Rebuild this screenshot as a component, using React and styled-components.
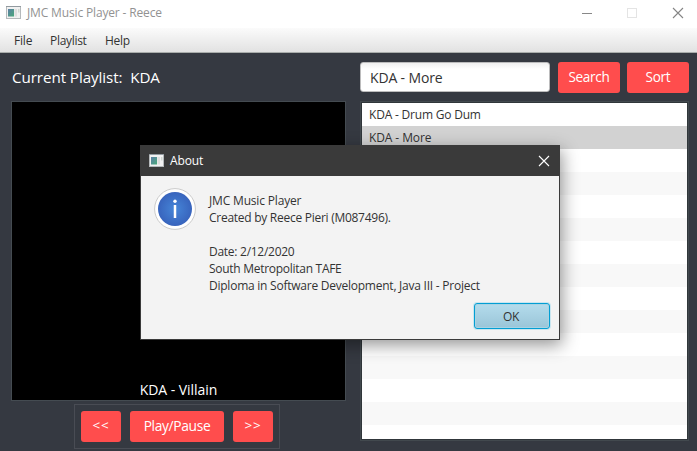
import React from "react";
import styled, { createGlobalStyle } from "styled-components";

const Global = createGlobalStyle`
  * { box-sizing: border-box; }
  body { margin: 0; overflow: hidden; font-family: "Open Sans", "Noto Sans", sans-serif; }
`;

const Window = styled.div`
  position: relative;
  width: 697px;
  height: 451px;
  display: flex;
  flex-direction: column;
  background: #353941;
  overflow: hidden;
`;

const Text = styled.span`
  display: block;
  white-space: pre;
  font-size: ${(p) => p.$size || 12}px;
  letter-spacing: ${(p) => p.$track || 0}px;
  line-height: 17px;
  color: ${(p) => p.$color || "#333"};
`;

const TitleBar = styled.header`
  height: 28px;
  flex: none;
  display: flex;
  align-items: center;
  background: #fff;
  padding: 0 13px 3px 6px;
  gap: 6px;
`;

const WindowControls = styled.div`
  margin-left: auto;
  display: flex;
  align-items: center;
  gap: 35px;
`;

const MenuBar = styled.nav`
  height: 25px;
  flex: none;
  display: flex;
  align-items: center;
  padding: 1px 14px 0;
  background: linear-gradient(#fbfbfb, #e2e2e2);
  border-bottom: 1px solid #a9adab;
`;

const MenuItem = styled.div`
  width: ${(p) => p.$width}px;
`;

const Body = styled.main`
  flex: 1;
  display: grid;
  grid-template-columns: 335px 329px;
  column-gap: 14px;
  padding: 9px 8px 2px 11px;
`;

const Column = styled.section`
  display: flex;
  flex-direction: column;
`;

const Heading = styled.div`
  height: 39px;
  padding: 7px 0 0 1px;
`;

const Video = styled.div`
  height: 300px;
  background: #000;
  border: 1px solid #444b51;
  display: flex;
  align-items: flex-end;
  justify-content: center;
  padding-bottom: 2px;
`;

const Controls = styled.div`
  width: 206px;
  height: 45px;
  margin: 3px 0 0 63px;
  border: 1px solid #494c54;
  display: flex;
  gap: 9px;
  padding: 6px;
`;

const RedButton = styled.button`
  width: ${(p) => p.$width}px;
  height: 31px;
  flex: none;
  border: 0;
  padding: 0 0 2px;
  border-radius: 3px;
  background: #ff4d4d;
  font-family: inherit;
  display: flex;
  align-items: center;
  justify-content: center;
`;

const SearchRow = styled.div`
  height: 39px;
  display: flex;
  align-items: flex-start;
`;

const SearchField = styled.div`
  width: 190px;
  height: 30px;
  margin-right: 8px;
  padding: 0 9px;
  border: 1px solid #bcbcbd;
  border-radius: 3px;
  background: linear-gradient(#f0f0f0, #fff 6px);
  display: flex;
  align-items: center;
`;

const Gap = styled.div`
  width: 7px;
`;

const SongList = styled.div`
  height: 340px;
  padding: 1px;
  border: 1px solid #42494e;
  background: #30363a;
`;

const SongRows = styled.div`
  height: 336px;
  overflow: hidden;
`;

const Song = styled.div`
  height: 23px;
  padding: 3px 7px;
  background: ${(p) => (p.$selected ? "#d2d2d2" : "#fff")};
  &:nth-child(even) {
    background: ${(p) => (p.$selected ? "#d2d2d2" : "#f8f8f8")};
  }
`;

const Dialog = styled.div`
  position: absolute;
  left: 140px;
  top: 145px;
  width: 420px;
  height: 195px;
  border: 1px solid #3a3a3a;
  background: #f3f3f3;
  box-shadow: 2px 5px 16px rgba(0, 0, 0, 0.42);
  display: flex;
  flex-direction: column;
`;

const DialogTitle = styled.div`
  height: 30px;
  flex: none;
  display: flex;
  align-items: center;
  gap: 6px;
  padding: 0 9px 1px 8px;
  background: #3a3a3a;
`;

const DialogClose = styled.div`
  display: flex;
  margin-left: auto;
`;

const DialogBody = styled.div`
  display: flex;
  gap: 13px;
  padding: 12px 0 0 13px;
`;

const Message = styled.div`
  padding-top: 4px;
  display: flex;
  flex-direction: column;
`;

const DialogFooter = styled.div`
  margin: auto 9px 10px 0;
  display: flex;
  justify-content: flex-end;
`;

const OkButton = styled.button`
  width: 76px;
  height: 26px;
  padding: 0 2px 0 0;
  border: 1px solid #039ed3;
  border-radius: 3px;
  box-shadow: 0 0 0 1px #c9e6f0, inset 0 0 0 1px #a9d3e3;
  background: linear-gradient(#b4dcec, #9ac5d8);
  font-family: inherit;
  display: flex;
  align-items: center;
  justify-content: center;
`;

const AppIcon = () => (
  <svg width="15" height="14" viewBox="0 0 15 14">
    <defs>
      <linearGradient id="screen" x2="1" y2="1">
        <stop offset="0" stopColor="#5d7fa6" />
        <stop offset="1" stopColor="#48a879" />
      </linearGradient>
    </defs>
    <rect x=".5" y=".5" width="14" height="12" fill="#f1f1f1" stroke="#b5b9bb" />
    <path d="M0 .5h15" stroke="#929a9f" />
    <rect x="2" y="3" width="6" height="7.5" fill="url(#screen)" />
    <rect x="8.5" y="3" width="2.5" height="7.5" fill="#dedede" />
    <rect x="12" y="3" width="1.5" height="3.5" fill="#d0d8d2" />
  </svg>
);

const Cross = ({ color }) => (
  <svg width="12" height="12" viewBox="0 0 12 12">
    <path d="M1 1l10 10M11 1L1 11" stroke={color} strokeWidth="1.1" fill="none" />
  </svg>
);

const InfoIcon = () => (
  <svg width="42" height="42" viewBox="0 0 42 42">
    <defs>
      <radialGradient id="blue">
        <stop offset="0" stopColor="#4686d8" />
        <stop offset="1" stopColor="#3864bd" />
      </radialGradient>
    </defs>
    <circle cx="21" cy="21" r="20.4" fill="#fff" stroke="#cbcbcb" />
    <circle cx="21" cy="21" r="17" fill="url(#blue)" />
    <circle cx="21" cy="13.2" r="1.7" fill="#fff" />
    <path d="M21 17v13" stroke="#fff" strokeWidth="2.5" />
  </svg>
);

const songs = ["KDA - Drum Go Dum", "KDA - More", ...Array(13).fill("")];
const message = [
  ["JMC Music Player", -0.17],
  ["Created by Reece Pieri (M087496).", -0.27],
  [" ", 0],
  ["Date: 2/12/2020", -0.27],
  ["South Metropolitan TAFE", -0.28],
  ["Diploma in Software Development, Java III - Project", -0.24],
];

export default function App() {
  return (
    <>
      <Global />
      <Window>
        <TitleBar>
          <AppIcon />
          <Text $color="#929292" $track={-0.15}>JMC Music Player - Reece</Text>
          <WindowControls>
            <svg width="10" height="10"><path d="M0 5.5h10" stroke="#888" /></svg>
            <svg width="10" height="10"><rect x=".5" y=".5" width="9" height="9" fill="none" stroke="#e4e4e4" /></svg>
            <Cross color="#858585" />
          </WindowControls>
        </TitleBar>
        <MenuBar>
          <MenuItem $width={36}><Text $track={-0.2}>File</Text></MenuItem>
          <MenuItem $width={55}><Text $track={-0.3}>Playlist</Text></MenuItem>
          <MenuItem $width={40}><Text $track={-0.3}>Help</Text></MenuItem>
        </MenuBar>
        <Body>
          <Column>
            <Heading><Text $size={15.2} $color="#fff" $track={-0.08}>{"Current Playlist:  KDA"}</Text></Heading>
            <Video><Text $size={14} $color="#fff" $track={-0.05}>KDA - Villain</Text></Video>
            <Controls>
              <RedButton $width={40}><Text $size={13.5} $color="#fff" $track={0.8}>&lt;&lt;</Text></RedButton>
              <RedButton $width={94}><Text $size={13.8} $color="#fff" $track={-0.35}>Play/Pause</Text></RedButton>
              <RedButton $width={40}><Text $size={13.5} $color="#fff" $track={0.8}>&gt;&gt;</Text></RedButton>
            </Controls>
          </Column>
          <Column>
            <SearchRow>
              <SearchField><Text $size={14} $track={-0.15}>KDA - More</Text></SearchField>
              <RedButton $width={62}><Text $size={13.6} $color="#fff" $track={-0.3}>Search</Text></RedButton>
              <Gap />
              <RedButton $width={62}><Text $size={13.6} $color="#fff" $track={-0.3}>Sort</Text></RedButton>
            </SearchRow>
            <SongList>
              <SongRows>
                {songs.map((s, i) => (
                  <Song key={i} $selected={i === 1}><Text $track={i ? -0.1 : -0.2}>{s}</Text></Song>
                ))}
              </SongRows>
            </SongList>
          </Column>
        </Body>
        <Dialog>
          <DialogTitle>
            <AppIcon />
            <Text $color="#fff" $track={-0.15}>About</Text>
            <DialogClose><Cross color="#fff" /></DialogClose>
          </DialogTitle>
          <DialogBody>
            <InfoIcon />
            <Message>
              {message.map(([t, k], i) => <Text key={i} $track={k}>{t}</Text>)}
            </Message>
          </DialogBody>
          <DialogFooter><OkButton><Text $track={-0.3}>OK</Text></OkButton></DialogFooter>
        </Dialog>
      </Window>
    </>
  );
}
